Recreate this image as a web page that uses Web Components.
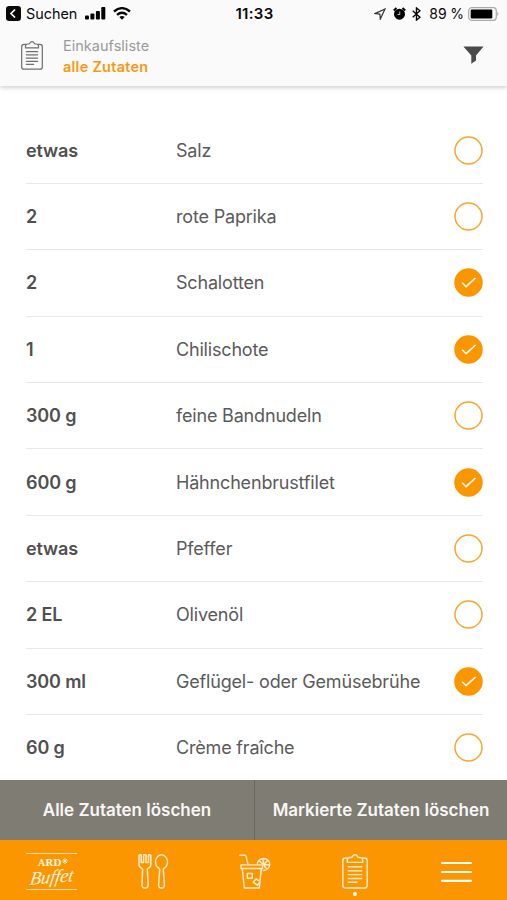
<!DOCTYPE html>
<html lang="de">
<head>
<meta charset="utf-8">
<title>Einkaufsliste</title>
<style>
html, body { margin: 0; height: 900px; overflow: hidden; background: #fff; font-family: Inter, "Liberation Sans", sans-serif; }
</style>
</head>
<body>
<shopping-app></shopping-app>
<script>
const define = (name, html, setup) => customElements.define(name, class extends HTMLElement {
  connectedCallback() {
    if (this.shadowRoot) return;
    const t = document.createElement('template');
    t.innerHTML = html;
    this.attachShadow({ mode: 'open' }).append(t.content.cloneNode(true));
    if (setup) setup(this, this.shadowRoot);
  }
});

define('clipboard-icon', `
<style>:host{display:block;width:24px;height:30px} svg{display:block;width:100%;height:100%;overflow:visible;stroke-width:var(--w,1.3)}</style>
<svg viewBox="0 0 26 36" preserveAspectRatio="none" fill="none" stroke="currentColor" stroke-linejoin="round" stroke-linecap="round">
<path d="M5.500 4.200H3.600Q.8 4.200 .8 7v25.200Q.8 35 3.600 35h18.800q2.800 0 2.800-2.800V7q0-2.800-2.800-2.800h-1.900"/>
<path d="M5.300 8.600V6.400q0-2.600 2.500-2.700h1.700q.8-.2 1.100-1.300Q11.300.8 13 .8t2.400 1.600q.3 1.100 1.100 1.300h1.700q2.500.1 2.500 2.700v2.200z"/>
<path d="M6.300 13.200h13.400M6.300 17.200h13.400M6.300 21.200h13.400M6.300 25.200h13.400M6.300 29h8.700"/>
</svg>`);

define('status-bar', `
<style>
:host{display:grid;grid-template-columns:1fr auto 1fr;align-items:center;height:27px;padding:0 8px 0 6px;color:#080808}
div{display:flex;align-items:center} svg{display:block;flex:none}
span{font-size:14.400px} .p{font-size:14px;letter-spacing:-.1px;white-space:nowrap}
.r{justify-content:flex-end} b{font-weight:600;font-size:15px;letter-spacing:.3px;padding-left:4px}
.back{margin-right:5px}.bars{margin:0 7px 0 8px}
</style>
<div>
<svg class="back" width="15" height="15" viewBox="0 0 15 15"><rect width="15" height="15" rx="3.200" fill="#080808"/><path d="M9 3.500 5 7.500l4 4" fill="none" stroke="#fff" stroke-width="1.700"/></svg>
<span>Suchen</span>
<svg class="bars" width="21" height="13" viewBox="0 0 21 13"><rect x="0" y="8.500" width="4" height="4" rx="1"/><rect x="5.400" y="6.500" width="4" height="6" rx="1"/><rect x="10.900" y="4" width="4" height="8.500" rx="1"/><rect x="16.300" y="0" width="4" height="12.500" rx="1"/></svg>
<svg width="18" height="13" viewBox="0 0 18 13" fill="none" stroke="#080808" stroke-width="2.300"><path d="M1 4.500Q9-2.200 17 4.500M4 7.800q5-4.200 10 0"/><path d="M6.300 10 9 12.800 11.700 10Q9 7.800 6.300 10z" fill="#080808" stroke="none"/></svg>
</div>
<b>11:33</b>
<div class="r">
<svg width="12" height="12" viewBox="0 0 12 12" fill="none" stroke="#333" stroke-width="1.200" style="margin-right:7px"><path d="M11 1 .9 5.600l5 .5.400 5z"/></svg>
<svg width="13" height="13" viewBox="0 0 13 13" style="margin-right:6px"><circle cx="6.500" cy="7.200" r="5.500"/><path d="M.8 3.500 3.500 1M12.200 3.500 9.500 1" stroke="#080808" stroke-width="2"/><path d="M6.800 4.500v3H4.500" fill="none" stroke="#ddd" stroke-width=".9"/></svg>
<svg width="9" height="14" viewBox="0 0 9 14" fill="none" stroke="#080808" stroke-width="1.400" style="margin-right:8px"><path d="m.7 3.800 7.300 6.400L4.500 13V1L8 3.800.7 10.200"/></svg>
<span class="p">89 %</span>
<svg width="31" height="14" viewBox="0 0 31 14" style="margin-left:4px"><rect x=".7" y=".7" width="27.600" height="12.600" rx="3" fill="none" stroke="#aaa" stroke-width="1.200"/><rect x="2.700" y="2.500" width="21.600" height="9" rx="1"/><path d="M29.400 5q2 2 0 4z" fill="#999"/></svg>
</div>`);

define('list-header', `
<style>
:host{display:flex;align-items:center;height:59px;padding:0 23px 0 20px}
clipboard-icon{width:22px;height:29px;color:#707070;--w:1.450;margin:0 20px 2px 1px}
.t{flex:1;font-size:14.500px;line-height:21px;color:#9b9b9b;letter-spacing:.02px;margin-bottom:2px}
.t b{display:block;color:#f6990f;font-weight:600;letter-spacing:.25px}
svg{margin-bottom:3px}
</style>
<clipboard-icon></clipboard-icon>
<div class="t"><slot name="title"></slot><b><slot name="filter"></slot></b></div>
<svg width="21" height="18" viewBox="0 0 21 18"><path d="M.4.400h20.200L13 9.500v5L8.300 17.700V9.500z" fill="#4a4a4a"/></svg>`);

define('check-circle', `
<style>
:host{display:block;width:29px;height:29px;flex:none} svg{display:block}
circle{fill:#fff;stroke:#f7a62f;stroke-width:1.500} path{display:none}
:host([checked]) circle{fill:#fa9600;stroke:#fa9600}
:host([checked]) path{display:block}
</style>
<svg width="29" height="29" viewBox="0 0 29 29"><circle cx="14.500" cy="14.500" r="13.500"/><path d="m8.200 14.700 3.900 4 9.400-8.700" fill="none" stroke="#fff" stroke-width="1.600"/></svg>`);

define('ingredient-row', `
<style>
:host{display:flex;align-items:center;height:66.380px;box-sizing:border-box;border-bottom:1px solid #e8e8e8;font-size:18px;color:#5a5a5a}
.q{width:150px;font-weight:600;color:#505050;letter-spacing:-.12px}.n{flex:1;white-space:nowrap;letter-spacing:-.18px}
</style>
<span class="q"></span><span class="n"><slot></slot></span><check-circle></check-circle>`,
(el, root) => {
  root.querySelector('.q').textContent = el.getAttribute('amount');
  root.querySelector('check-circle').toggleAttribute('checked', el.hasAttribute('checked'));
});

define('action-bar', `
<style>
:host{display:grid;grid-template-columns:254px 253px;height:60px;background:#7f7c74;color:#f8f7f4;font-size:17px;font-weight:600}
div{display:flex;align-items:center;justify-content:center;white-space:nowrap}
div+div{border-left:1px solid #69665f}
</style>
<div><slot name="all"></slot></div><div><slot name="marked"></slot></div>`);

define('brand-logo', `
<style>
:host{display:flex;flex-direction:column;align-items:center;width:51px;height:37px;box-sizing:border-box;border:solid #ffe0ad;border-width:1px 0;color:#fff4e0}
.a{font:bold 11px/12px "DejaVu Serif","Liberation Serif",serif;font-size:9.500px;margin-top:3px;display:flex;padding-left:3px}
.a svg{margin:1px 0 0 1px}
.b{font:italic 18.500px/17px "Liberation Serif",serif;transform:rotate(-5deg) skewX(-14deg);letter-spacing:-.1px}
</style>
<span class="a">ARD<svg width="6" height="6" viewBox="0 0 6 6" stroke="#fff" stroke-width=".7"><path d="M3 0v6M0 3h6M1 1l4 4M5 1 1 5"/></svg></span><span class="b">Buffet</span>`);

define('tab-bar', `
<style>
:host{display:grid;grid-template-columns:repeat(5,1fr);height:60px;background:#fb9600;color:#ffebcb}
div{display:flex;align-items:center;justify-content:center;position:relative}
svg{display:block;overflow:visible} clipboard-icon{width:26px;height:35px;--w:1.500;margin-top:3px}
i{position:absolute;width:4px;height:4px;border-radius:2px;background:#fff;left:48.500px;top:52px}
.x{padding:2px 0 0 2px}
</style>
<div class="x"><brand-logo></brand-logo></div>
<div class="x"><svg width="30" height="35" viewBox="0 0 30 36" preserveAspectRatio="none" fill="none" stroke="currentColor" stroke-width="1.500" stroke-linejoin="round"><path d="M1 1.500Q1 .8 1.800.8h1.400v8h2.400V.8h2.500v8h2.400V.8h1.500q.8 0 .8.700v9q0 3-2.700 4.300-.8.400-.8 1.200l.9 15.500q.1 3.500-3.100 3.500t-3.100-3.500L4.600 16q0-.8-.8-1.200Q1 13.500 1 10.500zM23.500.8c3.700 0 6 3.800 6 7.500 0 3.100-1.600 5.500-3.600 6.600-.5.300-.6.700-.6 1.200l1.100 15.600q.1 3.300-2.900 3.300t-2.900-3.300l1.100-15.600c0-.5-.1-.9-.6-1.200-2-1.100-3.600-3.500-3.600-6.600 0-3.700 2.300-7.500 6-7.500z"/></svg></div>
<div class="x"><svg width="31" height="35" viewBox="0 0 31 36" preserveAspectRatio="none" fill="none" stroke="currentColor" stroke-width="1.500" stroke-linejoin="round"><path d="M.3 1.200h5.300Q6.800 1.200 7.100 2.400L9 11M2 11.200h21.500v3.700H2zM3.300 15l2 20h15l2-20M8.300 20h5v5h-5zM14.200 29l3-3.500 4 3-2.800 3.500z"/><path d="M18.300 11a6.200 6.200 0 1 1 5.500 5.900M24.300 11l-4-4M24.300 11V5M24.300 11l4.200-4.200M24.300 11h6M24.300 11l3.500 4.400"/></svg></div>
<div><clipboard-icon></clipboard-icon><i></i></div>
<div><svg width="31" height="22" viewBox="0 0 31 22" style="margin-top:4px" stroke="#fff" stroke-width="2.200" stroke-linecap="round"><path d="M1 2h29M1 11h29M1 19.800h29"/></svg></div>`);

define('shopping-app', `
<style>
:host{display:flex;flex-direction:column;width:507px;height:900px;background:#fff}
header{height:86px;background:#fafafa;box-shadow:0 1px 5px rgba(0,0,0,.24);flex:none}
main{height:694px;flex:none;overflow:hidden;box-sizing:border-box;padding:31.500px 24px 0 26px}
</style>
<header><status-bar></status-bar><list-header><span slot="title">Einkaufsliste</span><span slot="filter">alle Zutaten</span></list-header></header>
<main>
<ingredient-row amount="etwas">Salz</ingredient-row>
<ingredient-row amount="2">rote Paprika</ingredient-row>
<ingredient-row amount="2" checked>Schalotten</ingredient-row>
<ingredient-row amount="1" checked>Chilischote</ingredient-row>
<ingredient-row amount="300 g">feine Bandnudeln</ingredient-row>
<ingredient-row amount="600 g" checked>Hähnchenbrustfilet</ingredient-row>
<ingredient-row amount="etwas">Pfeffer</ingredient-row>
<ingredient-row amount="2 EL">Olivenöl</ingredient-row>
<ingredient-row amount="300 ml" checked>Geflügel- oder Gemüsebrühe</ingredient-row>
<ingredient-row amount="60 g">Crème fraîche</ingredient-row>
</main>
<action-bar><span slot="all">Alle Zutaten löschen</span><span slot="marked">Markierte Zutaten löschen</span></action-bar>
<tab-bar></tab-bar>`);
</script>
</body>
</html>
